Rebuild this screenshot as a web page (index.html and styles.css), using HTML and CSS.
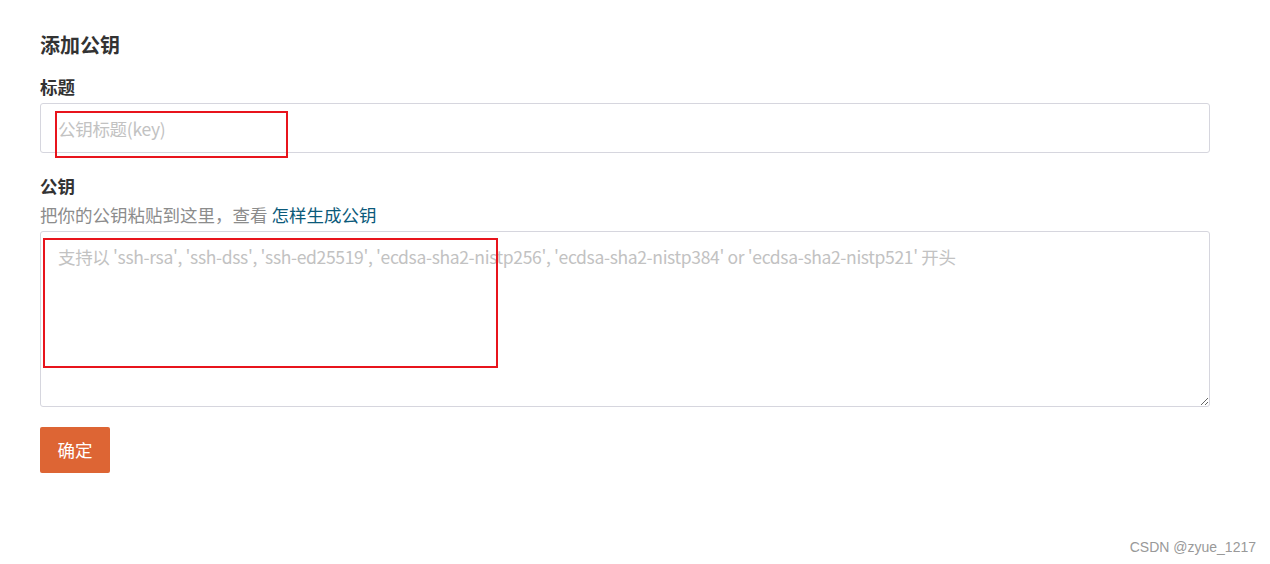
FILE: index.html
```html
<!DOCTYPE html>
<html lang="zh-CN">
<head>
<meta charset="utf-8">
<title>添加公钥</title>
<link rel="stylesheet" href="styles.css">
</head>
<body>
<main class="page">
  <h3 class="title">添加公钥</h3>
  <form class="form">
    <div class="field">
      <label class="label" for="key-title">标题</label>
      <div class="control">
        <input id="key-title" class="input" type="text" placeholder="公钥标题(key)">
        <span class="mark mark-input"></span>
      </div>
    </div>
    <div class="field field-key">
      <label class="label" for="key-body">公钥</label>
      <p class="help">把你的公钥粘贴到这里，查看 <a class="link" href="#">怎样生成公钥</a></p>
      <div class="control">
        <textarea id="key-body" class="textarea" placeholder="支持以 'ssh-rsa', 'ssh-dss', 'ssh-ed25519', 'ecdsa-sha2-nistp256', 'ecdsa-sha2-nistp384' or 'ecdsa-sha2-nistp521' 开头"></textarea>
        <span class="mark mark-textarea"></span>
      </div>
    </div>
    <button class="btn" type="button">确定</button>
  </form>
</main>
<div class="watermark">CSDN @zyue_1217</div>
</body>
</html>
```
FILE: styles.css
```css
html, body {
  margin: 0;
  padding: 0;
  background: #fff;
}
body {
  font-family: "Noto Sans CJK SC", "Noto Sans", sans-serif;
  color: #333;
  width: 1270px;
  height: 564px;
  position: relative;
  overflow: hidden;
}
.page {
  width: 1170px;
  margin-left: 40px;
  padding-top: 31px;
}
.title {
  margin: 0;
  font-size: 20px;
  line-height: 28px;
  font-weight: 700;
  color: #333;
}
.form {
  margin: 16px 0 0;
  display: flex;
  flex-direction: column;
  align-items: flex-start;
}
.field {
  width: 100%;
  display: flex;
  flex-direction: column;
}
.field-key {
  margin-top: 21px;
}
.label {
  font-size: 17.5px;
  line-height: 24px;
  font-weight: 700;
  color: #333;
  margin-bottom: 4px;
}
.field-key .label {
  margin-bottom: 5px;
}
.help {
  margin: 0 0 4px;
  font-size: 17.5px;
  line-height: 24px;
  color: #8c8c8c;
}
.link {
  color: #0b5a7a;
  text-decoration: none;
}
.control {
  position: relative;
}
.input, .textarea {
  box-sizing: border-box;
  display: block;
  width: 100%;
  border: 1px solid #d6d6de;
  border-radius: 3px;
  font-family: "Noto Sans CJK SC", "Noto Sans", sans-serif;
  font-size: 17.5px;
  color: #333;
  background: #fff;
  outline: none;
  margin: 0;
}
.input {
  height: 50px;
  padding: 0 17px;
  line-height: 24px;
  letter-spacing: -0.3px;
}
.textarea {
  height: 176px;
  padding: 13px 17px;
  line-height: 24px;
  letter-spacing: -0.35px;
  resize: vertical;
}
.input::placeholder, .textarea::placeholder {
  color: #c2c2c2;
  opacity: 1;
}
.mark {
  position: absolute;
  border: 2px solid #e8141c;
  box-sizing: border-box;
  pointer-events: none;
}
.mark-input {
  left: 15px;
  top: 8px;
  width: 233px;
  height: 47px;
}
.mark-textarea {
  left: 3px;
  top: 7px;
  width: 455px;
  height: 130px;
}
.btn {
  margin-top: 20px;
  height: 46px;
  width: 70px;
  padding: 0;
  border: none;
  border-radius: 2px;
  background: #dd6534;
  color: #fff;
  font-family: "Noto Sans CJK SC", "Noto Sans", sans-serif;
  font-size: 17.5px;
  line-height: 24px;
  cursor: pointer;
}
.watermark {
  position: absolute;
  right: 14px;
  bottom: 8px;
  font-family: "Liberation Sans", Arial, sans-serif;
  font-size: 14px;
  line-height: 18px;
  color: #999;
}
```
